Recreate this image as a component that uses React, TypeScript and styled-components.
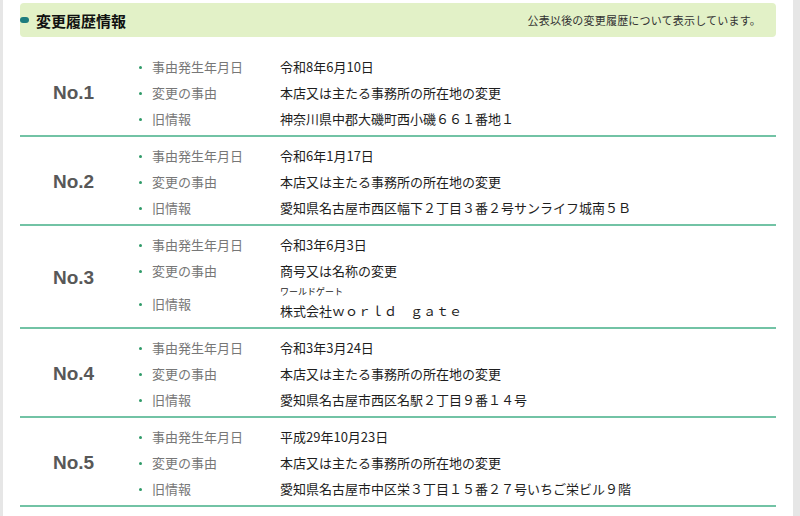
import React from "react";
import styled, { createGlobalStyle } from "styled-components";

const GlobalStyle = createGlobalStyle`
  html, body { margin: 0; padding: 0; }
  body {
    background: #e6e6e6;
    font-family: "Noto Sans CJK JP", "Noto Sans", sans-serif;
    color: #222;
  }
`;

const Page = styled.div`
  margin: 0 7px 0 3px;
  min-height: 516px;
  background: #fff;
  padding: 3px 17px 0 17px;
  box-sizing: border-box;
`;

const Header = styled.div`
  height: 34px;
  background: #e2f1c7;
  border-radius: 4px;
  display: flex;
  align-items: center;
  justify-content: space-between;
  padding: 0 15px 0 0;
`;

const Title = styled.h2`
  margin: 0;
  display: flex;
  align-items: center;
  font-size: 15px;
  font-weight: 700;
  color: #111;
  letter-spacing: 0;
`;

const Marker = styled.span`
  display: inline-block;
  width: 9px;
  height: 6px;
  border-radius: 3px;
  background: #1c7c7e;
  margin-right: 7px;
`;

const Note = styled.p`
  margin: 0;
  font-size: 11px;
  letter-spacing: 0.2px;
  color: #333;
`;

const List = styled.div`
  margin-top: 11px;
`;

const Entry = styled.section`
  display: grid;
  grid-template-columns: 107px 1fr;
  align-items: center;
  padding: 6px 0 3px;
  border-bottom: 2px solid #72c3a5;
`;

const Num = styled.div`
  text-align: center;
  font-family: "Liberation Sans", Arial, sans-serif;
  font-weight: 700;
  font-size: 19px;
  color: #585858;
`;

const Items = styled.div`
  display: flex;
  flex-direction: column;
`;

const Item = styled.div`
  display: grid;
  grid-template-columns: 25px 128px 1fr;
  align-items: center;
  min-height: 26px;
`;

const Dot = styled.span`
  justify-self: start;
  margin-left: 12px;
  width: 3px;
  height: 3px;
  border-radius: 50%;
  background: #2f9a68;
`;

const Label = styled.span`
  font-size: 13px;
  color: #777;
  line-height: 26px;
`;

const Value = styled.div`
  font-size: 13px;
  color: #1e1e1e;
  line-height: 26px;
`;

const Ruby = styled.div`
  font-size: 9px;
  line-height: 13px;
  padding-top: 1px;
  color: #222;
`;

type Row = { label: string; value: string; ruby?: string };
type Record = { no: number; rows: Row[] };

const data: Record[] = [
  {
    no: 1,
    rows: [
      { label: "事由発生年月日", value: "令和8年6月10日" },
      { label: "変更の事由", value: "本店又は主たる事務所の所在地の変更" },
      { label: "旧情報", value: "神奈川県中郡大磯町西小磯６６１番地１" },
    ],
  },
  {
    no: 2,
    rows: [
      { label: "事由発生年月日", value: "令和6年1月17日" },
      { label: "変更の事由", value: "本店又は主たる事務所の所在地の変更" },
      { label: "旧情報", value: "愛知県名古屋市西区幅下２丁目３番２号サンライフ城南５Ｂ" },
    ],
  },
  {
    no: 3,
    rows: [
      { label: "事由発生年月日", value: "令和3年6月3日" },
      { label: "変更の事由", value: "商号又は名称の変更" },
      { label: "旧情報", value: "株式会社ｗｏｒｌｄ　ｇａｔｅ", ruby: "ワールドゲート" },
    ],
  },
  {
    no: 4,
    rows: [
      { label: "事由発生年月日", value: "令和3年3月24日" },
      { label: "変更の事由", value: "本店又は主たる事務所の所在地の変更" },
      { label: "旧情報", value: "愛知県名古屋市西区名駅２丁目９番１４号" },
    ],
  },
  {
    no: 5,
    rows: [
      { label: "事由発生年月日", value: "平成29年10月23日" },
      { label: "変更の事由", value: "本店又は主たる事務所の所在地の変更" },
      { label: "旧情報", value: "愛知県名古屋市中区栄３丁目１５番２７号いちご栄ビル９階" },
    ],
  },
];

export default function App() {
  return (
    <>
      <GlobalStyle />
      <Page>
        <Header>
          <Title>
            <Marker />
            変更履歴情報
          </Title>
          <Note>公表以後の変更履歴について表示しています。</Note>
        </Header>
        <List>
          {data.map((r) => (
            <Entry key={r.no}>
              <Num>No.{r.no}</Num>
              <Items>
                {r.rows.map((row) => (
                  <Item key={row.label}>
                    <Dot />
                    <Label>{row.label}</Label>
                    <Value>
                      {row.ruby && <Ruby>{row.ruby}</Ruby>}
                      {row.value}
                    </Value>
                  </Item>
                ))}
              </Items>
            </Entry>
          ))}
        </List>
      </Page>
    </>
  );
}
